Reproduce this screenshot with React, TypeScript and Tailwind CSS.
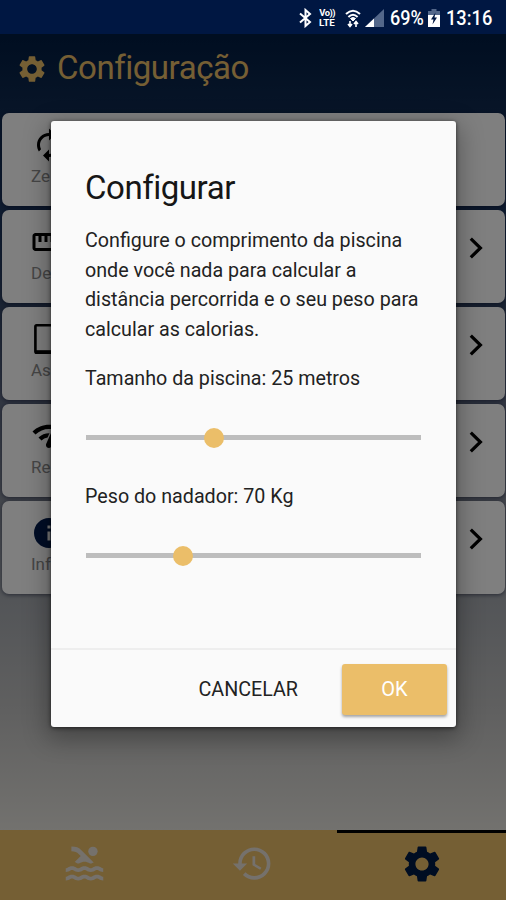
import type { IconType } from "react-icons";
import {
  MdAutorenew,
  MdHistory,
  MdInfo,
  MdNetworkCheck,
  MdPool,
  MdSettings,
  MdStraighten,
} from "react-icons/md";

type Item = {
  label: string;
  icon: IconType;
  iconClass: string;
  arrow: boolean;
};

const TabletIcon: IconType = ({ className }) => (
  <svg className={className} viewBox="0 0 36 36" fill="none" stroke="currentColor">
    <rect x="4.4" y="4.2" width="27.2" height="27.4" rx="1.2" strokeWidth="2.6" />
    <path d="M4 31 H32" strokeWidth="3.6" />
  </svg>
);

const items: Item[] = [
  { label: "Ze", icon: MdAutorenew, iconClass: "text-black", arrow: false },
  { label: "De", icon: MdStraighten, iconClass: "text-black", arrow: true },
  { label: "As", icon: TabletIcon, iconClass: "text-black", arrow: true },
  { label: "Re", icon: MdNetworkCheck, iconClass: "text-black", arrow: true },
  { label: "Inf", icon: MdInfo, iconClass: "text-[#001a4d]", arrow: true },
];

const StatusBar = () => (
  <div className="flex h-[34px] items-center bg-[#001742] pt-[2px] pl-[299px] text-white">
    <svg width="13" height="20" viewBox="0 0 13 20" fill="none" stroke="currentColor" strokeWidth="2">
      <path d="M1 5.5 L11 14 L6.5 18 V2 L11 6 L1 14.5" />
    </svg>
    <div className="ml-[6px] flex w-[18px] flex-col items-center text-[8.5px] leading-[10px] font-bold">
      <span className="scale-x-110 tracking-tighter">Vo))</span>
      <span className="scale-x-[1.15]">LTE</span>
    </div>
    <svg className="ml-[9px]" width="16" height="19" viewBox="0 0 16 19" fill="none" stroke="currentColor">
      <path d="M1 5 Q8 -1.5 15 5" strokeWidth="2" />
      <path d="M3.4 8 Q8 3.6 12.6 8" strokeWidth="2" />
      <path d="M5.5 9.5 Q8 7.5 10.5 9.5 L8 12 Z" fill="currentColor" strokeWidth="1" />
      <path d="M5 12 V17 M3 15 L5 17.5 L7 15 M11 18 V13 M9 15 L11 12.5 L13 15" strokeWidth="1.6" />
    </svg>
    <svg className="ml-[4px]" width="19" height="18" viewBox="0 0 19 18">
      <path d="M0 18 L19 0 V18 Z" fill="#53678a" />
      <path d="M0 18 L9 9.5 V18 Z" fill="#fff" />
    </svg>
    <span className="ml-[6px] w-[35px] text-[20.5px] leading-none font-medium whitespace-nowrap">
      <span className="inline-block origin-left scale-x-[0.88]">69%</span>
    </span>
    <svg className="ml-[3px]" width="12" height="18" viewBox="0 0 12 18">
      <path d="M3.5 0 H8.5 V2 H12 V7 H0 V2 H3.5 Z" fill="#53678a" />
      <path d="M0 6 H12 V18 H0 Z" fill="#fff" />
      <path d="M7.5 3.5 L3 10.5 H5.5 L4.5 15.5 L9 8.5 H6.5 Z" fill="#001742" />
    </svg>
    <span className="ml-[6px] text-[20.5px] leading-none font-medium">
      <span className="inline-block origin-left scale-x-[0.89]">13:16</span>
    </span>
  </div>
);

const SettingsRow = ({ item }: { item: Item }) => {
  const Icon = item.icon;

  return (
    <div className="flex h-[93px] items-center justify-between rounded-[7px] bg-white pr-[22px] pl-[29px] shadow-[0_1px_4px_rgba(0,10,40,0.55)]">
      <div className="-mt-1 flex flex-col">
        <Icon className={`size-9 ${item.iconClass}`} />
        <span className="mt-[1px] text-[17px] leading-6 text-[#8c8c8c]">{item.label}</span>
      </div>
      {item.arrow && (
        <svg
          className="mt-[-17px] text-black"
          width="14"
          height="22"
          viewBox="0 0 14 22"
          fill="none"
          stroke="currentColor"
          strokeWidth="3.2"
        >
          <path d="M1.8 1.6 L11.4 11 L1.8 20.4" />
        </svg>
      )}
    </div>
  );
};

const Slider = ({ value }: { value: number }) => (
  <div className="relative flex h-5 items-center">
    <div className="h-[5px] w-full bg-[#bdbdbd]" />
    <div
      className="absolute top-[1px] size-5 -translate-x-1/2 rounded-full bg-[#ebbe69]"
      style={{ left: `${value}%` }}
    />
  </div>
);

const ConfigDialog = () => (
  <div className="absolute top-[121px] left-[51px] flex h-[606px] w-[405px] flex-col rounded-[3px] bg-[#fafafa] text-[#222] shadow-[0_8px_24px_4px_rgba(0,0,0,0.3),0_1px_4px_rgba(0,0,0,0.6)]">
    <div className="flex-1 px-[34px] pt-[46px]">
      <h2 className="text-[33px] leading-[42px] tracking-[-0.45px] text-[#161616]">Configurar</h2>
      <p className="mt-[17px] text-[19.7px] leading-[29.5px] whitespace-nowrap">
        Configure o comprimento da piscina
        <br />
        onde você nada para calcular a
        <br />
        distância percorrida e o seu peso para
        <br />
        calcular as calorias.
      </p>
      <p className="mt-5 text-[19.7px] leading-[29px]">Tamanho da piscina: 25 metros</p>
      <div className="mt-[34px] ml-[1px] w-[335px]">
        <Slider value={38.2} />
      </div>
      <p className="mt-[35px] text-[19.7px] leading-[29px]">Peso do nadador: 70 Kg</p>
      <div className="mt-[34px] ml-[1px] w-[335px]">
        <Slider value={29.1} />
      </div>
    </div>
    <div className="flex h-[79px] items-center justify-end border-t-2 border-[#eeeeee] pr-[9px]">
      <button className="mt-[2px] mr-[44px] text-[19.7px] text-[#222]">CANCELAR</button>
      <button className="mt-[1px] h-[51px] w-[105px] rounded-[3px] bg-[#ebbe69] text-[20px] text-white shadow-[0_2px_3px_rgba(0,0,0,0.35)]">
        OK
      </button>
    </div>
  </div>
);

const App = () => {
  return (
    <div className="relative h-[900px] w-[506px] overflow-hidden font-['Roboto',sans-serif]">
      <StatusBar />

      <div className="relative flex h-[866px] flex-col bg-[linear-gradient(180deg,#001c42_0%,#102a50_9%,#203a62_22%,#384a68_32%,#626c84_42%,#868c98_54%,#a6aab0_65%,#c0c0c0_78%,#e6e4de_92%)]">
        <header className="flex h-[79px] items-start pt-[11px] pl-4 text-[#ebbe69]">
          <MdSettings className="mt-[8px] size-8" />
          <h1 className="ml-[9px] text-[33px] leading-[46px] tracking-[-0.45px]">Configuração</h1>
        </header>

        <main className="flex flex-1 flex-col gap-1 pr-[1px] pl-[2px]">
          {items.map((item) => (
            <SettingsRow key={item.label} item={item} />
          ))}
        </main>

        <nav className="grid h-[70px] grid-cols-3 bg-[#ebbe69]">
          <div className="flex items-center justify-center pb-[3px] text-[#eae3d8]">
            <MdPool className="size-[45px]" />
          </div>
          <div className="flex items-center justify-center pb-[3px] text-[#eae3d8]">
            <MdHistory className="size-[43px]" />
          </div>
          <div className="flex items-center justify-center border-t-[3px] border-black pb-[6px] text-[#001a44]">
            <MdSettings className="size-[44px]" />
          </div>
        </nav>

        <div className="absolute inset-0 bg-black/50" />
      </div>

      <ConfigDialog />
    </div>
  );
};

export default App;
